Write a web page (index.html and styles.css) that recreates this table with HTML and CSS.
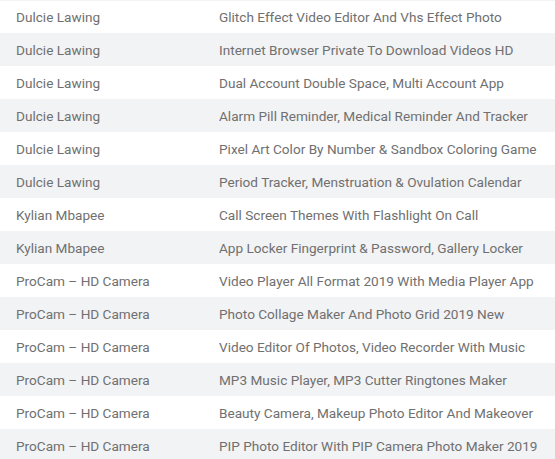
FILE: index.html
```html
<!DOCTYPE html>
<html>
<head>
<meta charset="utf-8">
<link rel="stylesheet" href="styles.css">
</head>
<body>
<table class="apps">
  <tbody>
    <tr><td class="dev">Dulcie Lawing</td><td class="app">Glitch Effect Video Editor And Vhs Effect Photo</td></tr>
    <tr><td class="dev">Dulcie Lawing</td><td class="app">Internet Browser Private To Download Videos HD</td></tr>
    <tr><td class="dev">Dulcie Lawing</td><td class="app">Dual Account Double Space, Multi Account App</td></tr>
    <tr><td class="dev">Dulcie Lawing</td><td class="app">Alarm Pill Reminder, Medical Reminder And Tracker</td></tr>
    <tr><td class="dev">Dulcie Lawing</td><td class="app">Pixel Art Color By Number &amp; Sandbox Coloring Game</td></tr>
    <tr><td class="dev">Dulcie Lawing</td><td class="app">Period Tracker, Menstruation &amp; Ovulation Calendar</td></tr>
    <tr><td class="dev">Kylian Mbapee</td><td class="app">Call Screen Themes With Flashlight On Call</td></tr>
    <tr><td class="dev">Kylian Mbapee</td><td class="app">App Locker Fingerprint &amp; Password, Gallery Locker</td></tr>
    <tr><td class="dev">ProCam – HD Camera</td><td class="app">Video Player All Format 2019 With Media Player App</td></tr>
    <tr><td class="dev">ProCam – HD Camera</td><td class="app">Photo Collage Maker And Photo Grid 2019 New</td></tr>
    <tr><td class="dev">ProCam – HD Camera</td><td class="app">Video Editor Of Photos, Video Recorder With Music</td></tr>
    <tr><td class="dev">ProCam – HD Camera</td><td class="app">MP3 Music Player, MP3 Cutter Ringtones Maker</td></tr>
    <tr><td class="dev">ProCam – HD Camera</td><td class="app">Beauty Camera, Makeup Photo Editor And Makeover</td></tr>
    <tr><td class="dev">ProCam – HD Camera</td><td class="app">PIP Photo Editor With PIP Camera Photo Maker 2019</td></tr>
  </tbody>
</table>
</body>
</html>
```
FILE: styles.css
```css
html, body {
  margin: 0;
  padding: 0;
  background: #ffffff;
}
body {
  font-family: Roboto, "Liberation Sans", sans-serif;
  font-size: 13.6px;
  color: #707070;
}
.apps {
  width: 100%;
  border-collapse: collapse;
  table-layout: fixed;
}
.apps tr {
  height: 33px;
}
.apps tr:nth-child(even) {
  background: #f2f3f5;
}
.apps tr:first-child td {
  box-shadow: inset 0 1px 0 #f2f3f5;
}
.apps td {
  padding: 0 0 0 16px;
  white-space: nowrap;
  vertical-align: middle;
}
.apps .dev {
  width: 187px;
}
```
